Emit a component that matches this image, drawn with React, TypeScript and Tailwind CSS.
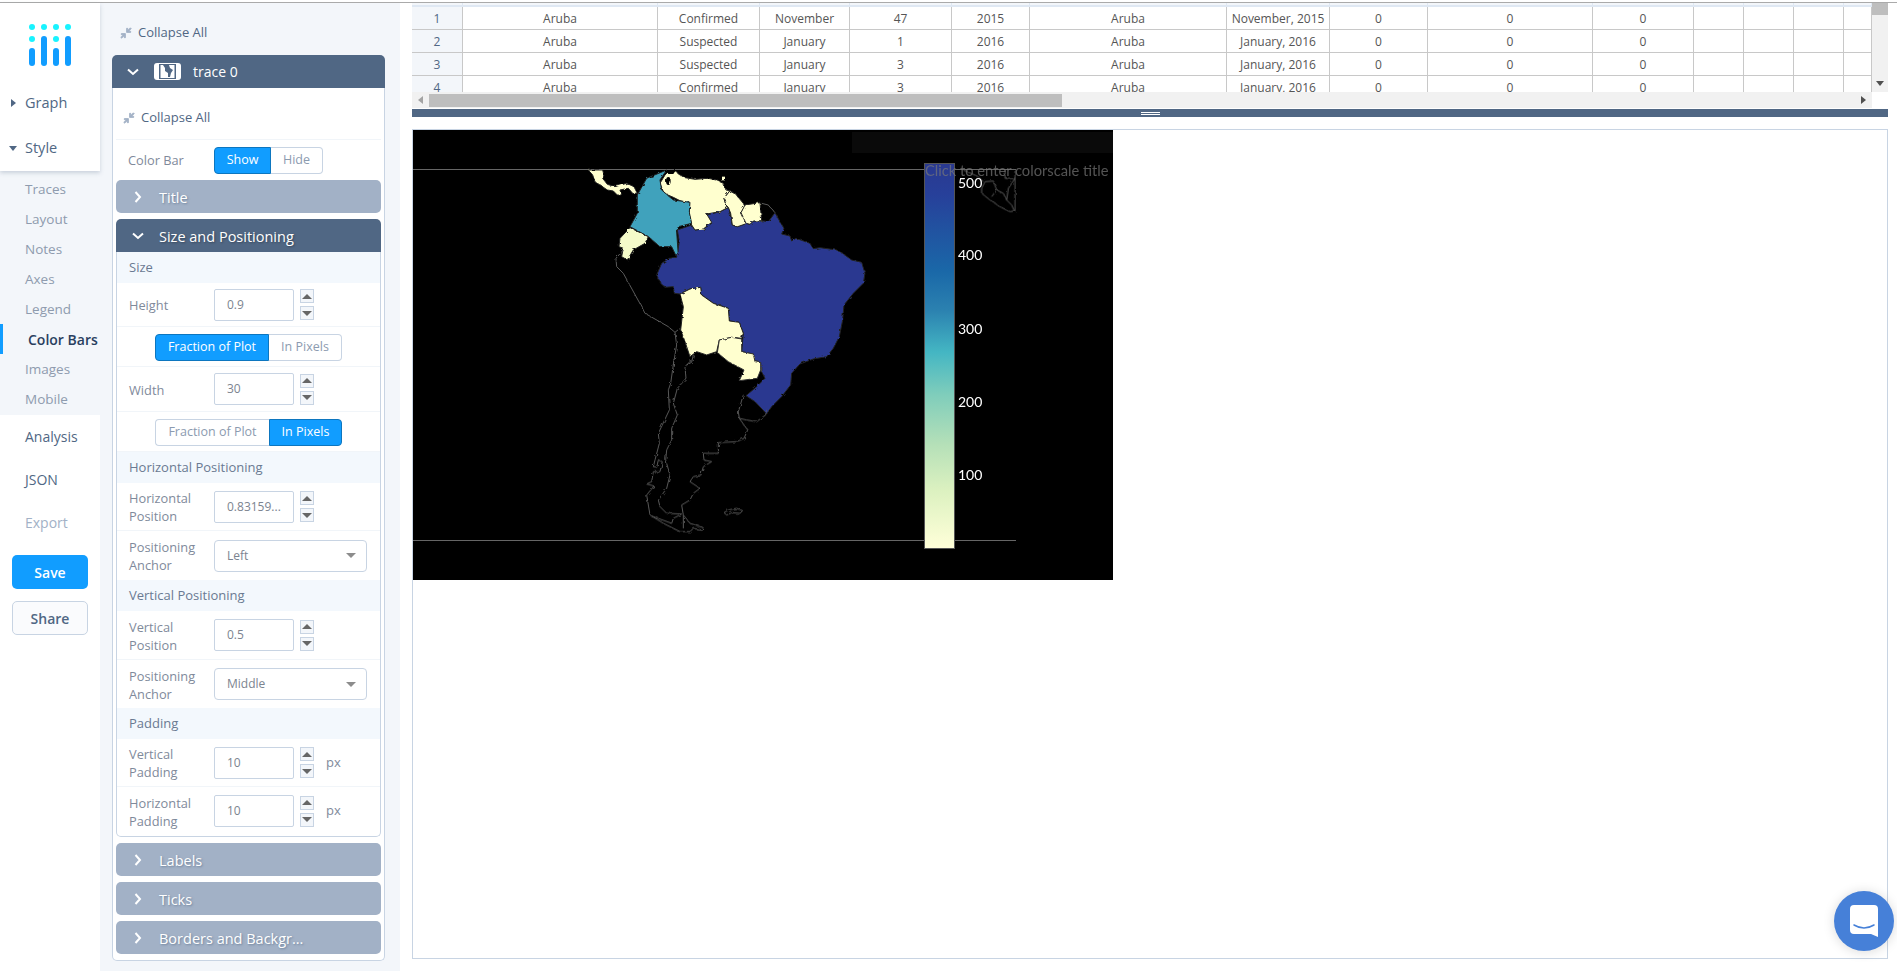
import React from "react";

const Collapse = () => (
  <svg viewBox="0 0 24 24" className="w-[14px] h-[14px] fill-[#a2b1c6] stroke-[#a2b1c6] stroke-[1.5] shrink-0">
    <path d="M19.5,3.09L15,7.59V4H13V11H20V9H16.41L20.91,4.5L19.5,3.09M4,13V15H7.59L3.09,19.5L4.5,20.91L9,16.41V20H11V13H4Z" />
  </svg>
);

const Chevron = ({ open }: { open: boolean }) => (
  <svg viewBox="0 0 12 12" className="w-[12px] h-[12px] fill-none stroke-white stroke-[2] shrink-0">
    {open ? <path d="M1 3.500 6 8l5-4.500" /> : <path d="M3.500 1 8 6l-4.500 5" />}
  </svg>
);

const Logo = () => (
  <svg viewBox="0 0 60 50" className="w-[60px] h-[50px] block">
    {[3, 15, 27, 39].map((x) => (
      <circle key={x} cx={x + 9} cy={6} r={3} fill="#19f3ff" />
    ))}
    {[3, 27].map((x) => (
      <circle key={x} cx={x + 9} cy={18} r={3} fill="#19f3ff" />
    ))}
    <rect x={9} y={27} width={6} height={18} rx={3} fill="#119dff" />
    <rect x={21} y={15} width={6} height={30} rx={3} fill="#119dff" />
    <rect x={33} y={27} width={6} height={18} rx={3} fill="#119dff" />
    <rect x={45} y={15} width={6} height={30} rx={3} fill="#119dff" />
  </svg>
);

const TraceIcon = () => (
  <svg viewBox="0 0 27 17" className="w-[27px] h-[17px] shrink-0">
    <rect x={0} y={0} width={27} height={17} rx={3} fill="#fff" />
    <rect x={5} y={1} width={17} height={15} fill="#506784" />
    <rect x={6.500} y={2} width={14} height={13} fill="#fff" />
    <path d="M9 2h6l1 3 3 2-2 3-1 4-2 0 0-4-3-2 0-3z" fill="#506784" />
  </svg>
);

const NavHead = ({ open, children }: { open: boolean; children: React.ReactNode }) => (
  <div className="flex items-center h-[20px] text-[14.500px] text-[#506784]">
    <span className="w-[25px] flex justify-center pl-[1px]">
      {open ? (
        <span className="w-0 h-0 border-x-[4px] border-x-transparent border-t-[5px] border-t-[#506784]" />
      ) : (
        <span className="w-0 h-0 border-y-[4px] border-y-transparent border-l-[5px] border-l-[#506784]" />
      )}
    </span>
    {children}
  </div>
);

const subItems = ["Traces", "Layout", "Notes", "Axes", "Legend", "Color Bars", "Images", "Mobile"];

const Nav = () => (
  <div className="w-[100px] shrink-0 flex flex-col bg-white h-full">
    <div className="h-[168px] relative z-10 shadow-[0_2px_4px_rgba(80,103,132,0.25)] bg-white">
      <div className="pt-[18px] pl-[20px]">
        <Logo />
      </div>
      <div className="mt-[22px]">
        <NavHead open={false}>Graph</NavHead>
      </div>
      <div className="mt-[25px]">
        <NavHead open={true}>Style</NavHead>
      </div>
    </div>
    <div className="h-[244px] bg-[#f3f6fa] pt-[3px]">
      {subItems.map((s) =>
        s === "Color Bars" ? (
          <div key={s} className="h-[30px] flex items-center border-l-[3px] border-[#119dff] pl-[25px] text-[14px] font-semibold text-[#2a3f5f]">
            {s}
          </div>
        ) : (
          <div key={s} className="h-[30px] flex items-center pl-[25px] text-[13.500px] text-[#8e9bae]">
            {s}
          </div>
        )
      )}
    </div>
    <div className="pl-[25px] text-[14px] pt-[11px] flex flex-col">
      <div className="h-[20px] flex items-center text-[#506784]">Analysis</div>
      <div className="h-[20px] mt-[23px] flex items-center text-[#506784]">JSON</div>
      <div className="h-[20px] mt-[23px] flex items-center text-[#a2b1c6]">Export</div>
    </div>
    <div className="px-[12px] mt-[23px] flex flex-col gap-[12px]">
      <div className="h-[34px] rounded-[5px] bg-[#119dff] text-white text-[14px] font-semibold flex items-center justify-center">Save</div>
      <div className="h-[34px] rounded-[5px] bg-[#fafbfd] border border-[#c8d4e3] text-[#506784] text-[14px] font-semibold flex items-center justify-center">Share</div>
    </div>
  </div>
);

const Toggle = ({ a, b, active, wa, wb }: { a: string; b: string; active: number; wa: string; wb: string }) => (
  <div className="flex h-[27px] text-[12.500px]">
    <div
      className={
        active === 0
          ? `${wa} flex items-center justify-center bg-[#119dff] text-white border border-[#0d76bf] rounded-l-[4px]`
          : `${wa} flex items-center justify-center bg-white text-[#8c9bb0] border border-r-0 border-[#c8d4e3] rounded-l-[4px]`
      }
    >
      {a}
    </div>
    <div
      className={
        active === 1
          ? `${wb} flex items-center justify-center bg-[#119dff] text-white border border-[#0d76bf] rounded-r-[4px]`
          : `${wb} flex items-center justify-center bg-white text-[#8c9bb0] border border-l-0 border-[#c8d4e3] rounded-r-[4px]`
      }
    >
      {b}
    </div>
  </div>
);

const Spin = () => (
  <div className="flex flex-col gap-[3px] ml-[6px]">
    <div className="w-[14px] h-[14px] bg-[#f3f6fa] border border-[#c8d4e3] flex items-center justify-center">
      <span className="w-0 h-0 border-x-[5px] border-x-transparent border-b-[5px] border-b-[#666]" />
    </div>
    <div className="w-[14px] h-[14px] bg-[#f3f6fa] border border-[#c8d4e3] flex items-center justify-center">
      <span className="w-0 h-0 border-x-[5px] border-x-transparent border-t-[5px] border-t-[#666]" />
    </div>
  </div>
);

const Label = ({ lines }: { lines: string[] }) => (
  <div className="w-[97px] pl-[12px] pt-[1px] shrink-0 text-[12.800px] leading-[18px] text-[#7f8a9b]">
    {lines.map((l) => (
      <div key={l}>{l}</div>
    ))}
  </div>
);

const NumRow = ({ h, lines, value, px }: { h: string; lines: string[]; value: string; px?: boolean }) => (
  <div className={`${h} flex items-center border-b border-[#f1f5f9]`}>
    <Label lines={lines} />
    <div className="w-[80px] h-[32px] border border-[#c8d4e3] rounded-[2px] px-[12px] flex items-center text-[12px] text-[#7c8490] bg-white">
      {value}
    </div>
    <Spin />
    {px ? <span className="ml-[12px] text-[13px] text-[#7f8a9b]">px</span> : null}
  </div>
);

const SelectRow = ({ h, value }: { h: string; value: string }) => (
  <div className={`${h} flex items-center`}>
    <Label lines={["Positioning", "Anchor"]} />
    <div className="w-[153px] h-[32px] border border-[#c8d4e3] rounded-[4px] pl-[12px] pr-[10px] flex items-center justify-between text-[12px] text-[#7c8490] bg-white">
      {value}
      <span className="w-0 h-0 border-x-[5px] border-x-transparent border-t-[5px] border-t-[#8c8c8c]" />
    </div>
  </div>
);

const Section = ({ children }: { children: React.ReactNode }) => (
  <div className="h-[31px] bg-[#f3f8fd] flex items-center pl-[12px] text-[13px] text-[#6a7a92]">{children}</div>
);

const ToggleRow = ({ active }: { active: number }) => (
  <div className="h-[40px] flex items-center pl-[38px] pt-[1px] border-b border-[#f1f5f9]">
    <Toggle a="Fraction of Plot" b="In Pixels" active={active} wa="w-[114px]" wb="w-[73px]" />
  </div>
);

const Fold = ({ title }: { title: string }) => (
  <div className="h-[33px] rounded-[5px] bg-[#a2b1c6] flex items-center pl-[16px] text-white text-[14.500px] [text-shadow:1px_1px_2px_rgba(80,103,132,0.6)]">
    <Chevron open={false} />
    <span className="ml-[15px] mt-[2px]">{title}</span>
  </div>
);

const Panel = () => (
  <div className="w-[300px] shrink-0 bg-[#f3f6fa] pl-[12px] pr-[15px] h-full">
    <div className="h-[52px] flex items-center pl-[7px] pt-[8px] text-[13px] text-[#506784]">
      <Collapse />
      <span className="ml-[5px]">Collapse All</span>
    </div>
    <div className="h-[33px] bg-[#506784] rounded-t-[5px] flex items-center pl-[15px] text-white text-[14px]">
      <Chevron open={true} />
      <span className="ml-[15px]"><TraceIcon /></span>
      <span className="ml-[12px]">trace 0</span>
    </div>
    <div className="border border-t-0 border-[#c8d4e3] rounded-b-[5px] bg-white h-[873px] px-[3px]">
      <div className="h-[52px] flex items-center pl-[6px] pt-[8px] text-[13px] text-[#506784] border-b border-[#f1f5f9]">
        <Collapse />
        <span className="ml-[5px]">Collapse All</span>
      </div>
      <div className="h-[40px] flex items-center">
        <div className="w-[98px] pl-[12px] pt-[1px] shrink-0 text-[12.800px] text-[#7f8a9b]">Color Bar</div>
        <Toggle a="Show" b="Hide" active={0} wa="w-[57px]" wb="w-[52px]" />
      </div>
      <div className="flex flex-col gap-[6px]">
        <Fold title="Title" />
        <div>
          <div className="h-[33px] rounded-t-[5px] bg-[#506784] flex items-center pl-[16px] text-white text-[14.500px] [text-shadow:1px_1px_2px_rgba(0,0,0,0.3)]">
            <Chevron open={true} />
            <span className="ml-[15px] mt-[2px]">Size and Positioning</span>
          </div>
          <div className="border border-t-0 border-[#c8d4e3] rounded-b-[5px] h-[585px]">
            <Section>Size</Section>
            <NumRow h="h-[44px]" lines={["Height"]} value="0.9" />
            <ToggleRow active={0} />
            <NumRow h="h-[45px]" lines={["Width"]} value="30" />
            <ToggleRow active={1} />
            <Section>Horizontal Positioning</Section>
            <NumRow h="h-[48px]" lines={["Horizontal", "Position"]} value="0.83159..." />
            <SelectRow h="h-[49px]" value="Left" />
            <Section>Vertical Positioning</Section>
            <NumRow h="h-[49px]" lines={["Vertical", "Position"]} value="0.5" />
            <SelectRow h="h-[48px]" value="Middle" />
            <Section>Padding</Section>
            <NumRow h="h-[48px]" lines={["Vertical", "Padding"]} value="10" px />
            <div className="h-[48px] flex items-center">
              <Label lines={["Horizontal", "Padding"]} />
              <div className="w-[80px] h-[32px] border border-[#c8d4e3] rounded-[2px] px-[12px] flex items-center text-[12px] text-[#7c8490] bg-white">10</div>
              <Spin />
              <span className="ml-[12px] text-[13px] text-[#7f8a9b]">px</span>
            </div>
          </div>
        </div>
        <Fold title="Labels" />
        <Fold title="Ticks" />
        <Fold title="Borders and Backgr..." />
      </div>
    </div>
  </div>
);

const rows = [
  ["1", "Aruba", "Confirmed", "November", "47", "2015", "Aruba", "November, 2015", "0", "0", "0", "", "", "", ""],
  ["2", "Aruba", "Suspected", "January", "1", "2016", "Aruba", "January, 2016", "0", "0", "0", "", "", "", ""],
  ["3", "Aruba", "Suspected", "January", "3", "2016", "Aruba", "January, 2016", "0", "0", "0", "", "", "", ""],
  ["4", "Aruba", "Confirmed", "January", "3", "2016", "Aruba", "January, 2016", "0", "0", "0", "", "", "", ""],
];
const gridCols =
  "grid grid-cols-[51px_195px_102px_90px_102px_78px_197px_103px_98px_165px_101px_50px_50px_50px_28px]";

const Table = () => (
  <div className="w-[1476px]">
    <div className="flex h-[89px]">
      <div className="w-[1460px] h-[89px] overflow-hidden">
        <div className={`${gridCols} h-[4px] border-b-2 border-[#dfe8f3]`}>
          {rows[0].map((_, i) => (
            <div key={i} className="bg-[#f3f6fa] border-r border-[#dfe8f3]" />
          ))}
        </div>
        {rows.map((r) => (
          <div key={r[0]} className={`${gridCols} h-[23px] border-b border-[#c8c8c8]`}>
            {r.map((c, i) => (
              <div
                key={i}
                className={
                  i === 0
                    ? "bg-[#f3f6fa] border-r border-[#c8c8c8] pt-[2px] flex items-center justify-center text-[12px] text-[#506784]"
                    : "border-r border-[#c8c8c8] pt-[2px] flex items-center justify-center text-[12px] text-[#555] whitespace-nowrap"
                }
              >
                {c}
              </div>
            ))}
          </div>
        ))}
      </div>
      <div className="w-[16px] bg-[#f1f1f1] flex flex-col justify-between items-center">
        <div className="w-full h-[12px] bg-[#bebebe]" />
        <span className="mb-[6px] w-0 h-0 border-x-[4px] border-x-transparent border-t-[5px] border-t-[#505050]" />
      </div>
    </div>
    <div className="w-[1460px] h-[16px] bg-[#f1f1f1] flex items-center pl-[6px]">
      <span className="w-0 h-0 border-y-[4px] border-y-transparent border-r-[5px] border-r-[#a3a3a3]" />
      <div className="ml-[6px] w-[633px] h-[13px] bg-[#bebebe]" />
      <span className="ml-auto mr-[6px] w-0 h-0 border-y-[4px] border-y-transparent border-l-[5px] border-l-[#505050]" />
    </div>
    <div className="mt-[1px] h-[8px] bg-[#506784] flex flex-col items-center justify-center gap-[1px]">
      <div className="w-[19px] h-[1px] bg-white" />
      <div className="w-[19px] h-[1px] bg-white" />
    </div>
  </div>
);

const BRAZIL =
  "M265 142 272 170 277 195 293 200 318 190 330 193 340 183 365 182 385 185 405 158 420 185 432 205 425 222 450 228 455 243 468 235 510 250 520 266 540 263 590 270 610 282 635 300 665 307 675 340 670 370 640 400 612 435 608 480 598 530 580 565 560 590 520 597 480 612 455 640 452 675 425 710 395 740 380 762 345 725 318 707 350 680 375 655 362 630 362 608 345 605 340 582 305 575 310 520 298 487 268 483 265 445 220 430 185 405 182 382 150 387 120 402 103 400 100 380 75 382 62 370 50 345 65 310 88 295 110 292 118 245 112 210 155 195 165 210 190 207 215 190 200 165 240 155Z";
const VENEZUELA =
  "M108 33 115 42 135 53 165 58 205 55 228 60 250 70 258 90 270 92 252 115 258 135 265 142 240 155 200 162 215 187 190 207 165 210 155 195 148 165 148 130 120 122 100 112 72 100 60 70 75 45 85 35Z";
const GUYANA = "M270 92 285 100 310 130 315 140 303 158 322 190 293 200 277 195 272 160 265 142 258 135 252 115Z";
const SURINAME = "M315 135 360 128 365 182 340 183 330 193 318 190 303 158Z";
const BOLIVIA =
  "M182 382 185 405 220 430 265 445 268 483 298 487 310 520 305 535 275 532 238 540 230 575 200 585 170 575 150 590 135 545 122 510 130 440 120 402 150 387Z";
const PARAGUAY = "M238 540 275 532 305 537 305 575 340 582 345 605 362 608 362 630 352 655 298 662 312 630 265 605 232 578Z";
const COLOMBIA =
  "M770 135 750 165 755 195 790 225 840 232 838 262 845 295 805 305 800 320 805 390 798 392 785 365 750 365 715 335 660 305 682 265 682 210 710 160Z";
const ECUADOR = "M660 308 715 335 705 355 670 375 652 405 635 395 640 370 627 365 630 340Z";
const PANAMA =
  "M535 135 578 135 582 150 578 160 592 178 615 185 650 175 672 185 682 205 668 205 655 190 630 195 635 210 622 210 610 198 592 195 570 180 555 170 548 150Z";
const gray = "#5a5a5a";

const Plot = () => (
  <svg viewBox="413 130 700 450" className="block w-[700px] h-[450px] bg-black">
    <defs>
      <linearGradient id="cb" x1="0" y1="0" x2="0" y2="1">
        <stop offset="0" stopColor="#2a3990" />
        <stop offset="0.08" stopColor="#27409a" />
        <stop offset="0.28" stopColor="#1a68a8" />
        <stop offset="0.38" stopColor="#2b81b0" />
        <stop offset="0.49" stopColor="#44b6c3" />
        <stop offset="0.6" stopColor="#7fcdbb" />
        <stop offset="0.73" stopColor="#b5e0b8" />
        <stop offset="0.85" stopColor="#dcf1c0" />
        <stop offset="1" stopColor="#ffffd9" />
      </linearGradient>
      <filter id="rough" x="-5%" y="-5%" width="110%" height="110%">
        <feTurbulence type="fractalNoise" baseFrequency="0.25" numOctaves={2} seed={4} result="n" />
        <feDisplacementMap in="SourceGraphic" in2="n" scale={3} />
      </filter>
    </defs>
    <rect x={852} y={132} width={261} height={21} fill="#0a0a0a" />
    <line x1={413} y1={169.500} x2={1016} y2={169.500} stroke="#666" />
    <line x1={413} y1={540.500} x2={1016} y2={540.500} stroke="#666" />
    <g filter="url(#rough)">
      <g transform="translate(640 160) scale(0.3333)" strokeWidth={3} strokeLinejoin="round">
        <path d={BRAZIL} fill="#2a3990" stroke="#222" />
        <path d={VENEZUELA} fill="#ffffcf" stroke="#222" />
        <path d={GUYANA} fill="#ffffcf" stroke="#222" />
        <path d={SURINAME} fill="#ffffcf" stroke="#222" />
        <path d={BOLIVIA} fill="#ffffcf" stroke="#222" />
        <path d={PARAGUAY} fill="#ffffcf" stroke="#333" />
        <path d="M365 130 385 135 405 158" fill="none" stroke={gray} />
        <ellipse cx={85} cy={63} rx={7} ry={12} fill="#000" />
        <path d="M78 30 108 30 100 42 85 42Z" fill="#000" />
        <rect x={243} y={50} width={12} height={11} fill="#ffffcf" />
      </g>
      <g transform="translate(410 125) scale(0.3333)" strokeWidth={3} strokeLinejoin="round">
        <path d={COLOMBIA} fill="#3fa2bc" stroke="#222" />
        <path d={ECUADOR} fill="#f5fbca" stroke="#222" />
        <path d={PANAMA} fill="#ffffcf" stroke="#222" />
        <path d="M640 375 618 400 620 425 640 445 695 545 705 565 775 605 795 622 810 610M795 622 800 660 790 720M850 690 845 712 830 720" fill="none" stroke={gray} />
      </g>
      <g transform="translate(600 360) scale(0.3333)" strokeWidth={3} strokeLinejoin="round" fill="none" stroke={gray}>
        <path d="M222 0 212 70 205 90 208 150 175 220 178 250 165 300 160 320 170 322 175 300 187 305 180 335 160 335 155 365 140 372 162 378 140 405 150 465 190 490 240 515 270 515 280 505 305 510 310 503 270 490 250 465 245 435 270 420 280 400 300 385 270 365 280 350 303 345 310 320 335 305 312 300 310 280 355 280 355 248 410 245 432 235 443 210 418 175 415 155 430 105" />
        <path d="M275 0 255 20 258 55 232 85 220 130 232 165 215 205 215 240 200 270 197 300 210 345 200 385 175 420 180 440 200 460 245 462 220 475 215 490 155 468" />
        <path d="M418 175 440 180 470 185 497 165 500 150" />
        <path d="M250 465 250 505" />
        <path d="M372 458 385 450 410 445 428 452 420 460 395 458 380 465Z" />
      </g>
      <g transform="translate(830 125) scale(0.3333)" strokeWidth={3} strokeLinejoin="round" fill="none" stroke={gray}>
        <path d="M455 190 465 170 490 168 500 195 520 205 530 225 545 240 553 258 540 260 510 245 480 225 455 205Z" />
        <path d="M400 135 445 155 460 170M525 135 525 160 555 160 535 190 530 225M555 135 555 258M500 195 485 215" />
      </g>
    </g>
    <rect x={924.500} y={163.500} width={30} height={385} fill="url(#cb)" stroke="#555" />
    <text x={925} y={176} fontFamily="Lato, sans-serif" fontSize={14.700} fill="#777" fillOpacity={0.7}>
      Click to enter colorscale title
    </text>
    {[
      ["500", 188],
      ["400", 260],
      ["300", 334],
      ["200", 407],
      ["100", 480],
    ].map(([t, y]) => (
      <text key={t as string} x={958} y={y as number} fontFamily="Lato, sans-serif" fontSize={14} fill="#fff">
        {t}
      </text>
    ))}
  </svg>
);

const Chat = () => (
  <div className="absolute left-[1834px] top-[891px] w-[60px] h-[60px] rounded-full bg-[#4680d8] shadow-[0_1px_12px_rgba(0,0,0,0.15)] flex items-center justify-center">
    <svg viewBox="0 0 28 32" className="w-[28px] h-[32px]">
      <path d="M4 0h20a4 4 0 0 1 4 4v28l-7-3H4a4 4 0 0 1-4-4V4a4 4 0 0 1 4-4z" fill="#fff" />
      <path d="M4 20q10 6 20 0" fill="none" stroke="#4680d8" strokeWidth={1.500} strokeLinecap="round" />
    </svg>
  </div>
);

export default function App() {
  return (
    <div className="relative w-[1897px] h-[971px] overflow-hidden bg-white font-['Open_Sans',sans-serif]">
      <div className="h-[2px] bg-white" />
      <div className="h-[1px] bg-[#aaaaaa]" />
      <div className="flex h-[968px]">
        <Nav />
        <Panel />
        <div className="flex-1 pl-[12px]">
          <Table />
          <div className="mt-[12px] w-[1476px] h-[830px] border border-[#c8d4e3]">
            <Plot />
          </div>
        </div>
      </div>
      <Chat />
    </div>
  );
}
